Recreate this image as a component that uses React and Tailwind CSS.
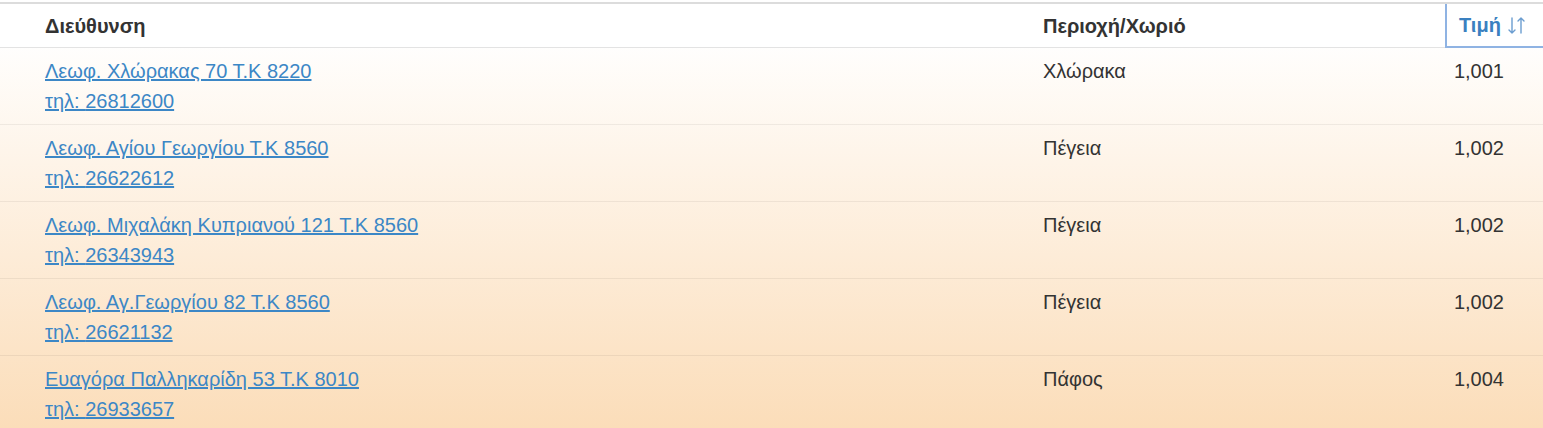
const rows = [
  { address: 'Λεωφ. Χλώρακας 70 Τ.Κ 8220', phone: '26812600', area: 'Χλώρακα', price: '1,001' },
  { address: 'Λεωφ. Αγίου Γεωργίου Τ.Κ 8560', phone: '26622612', area: 'Πέγεια', price: '1,002' },
  { address: 'Λεωφ. Μιχαλάκη Κυπριανού 121 Τ.Κ 8560', phone: '26343943', area: 'Πέγεια', price: '1,002' },
  { address: 'Λεωφ. Αγ.Γεωργίου 82 Τ.Κ 8560', phone: '26621132', area: 'Πέγεια', price: '1,002' },
  { address: 'Ευαγόρα Παλληκαρίδη 53 Τ.Κ 8010', phone: '26933657', area: 'Πάφος', price: '1,004' },
];

const SortIcon = () => (
  <svg width="18" height="17" viewBox="0 0 18 17" fill="none" stroke="#6b9dd0" strokeWidth="1.4" strokeLinecap="round" strokeLinejoin="round" className="ml-[7px]">
    <path d="M4 1v15M1 13l3 3 3-3" />
    <path d="M13 16V1M10 4l3-3 3 3" />
  </svg>
);

const App = () => {
  return (
    <div
      className="w-[1543px] h-[428px] overflow-hidden bg-gradient-to-b from-white from-[8%] to-[#fbddb9] text-[20px] text-[#333] pt-[2px]"
      style={{ fontFamily: '"Liberation Sans", Arial, sans-serif' }}
    >
      <div className="border-t-2 border-[#dcdcdc]">
        <div className="grid grid-cols-[1043px_402px_1fr] h-[44px] bg-white border-b border-[#e3e3e3] font-bold">
          <div className="pl-[45px] flex items-center">Διεύθυνση</div>
          <div className="flex items-center">Περιοχή/Χωριό</div>
          <div className="flex items-center pl-[12px] border-l-2 border-b-2 border-[#8fb3e3] text-[#3a80c0] -mb-px">
            Τιμή
            <SortIcon />
          </div>
        </div>

        {rows.map((row, i) => (
          <div key={i} className="grid grid-cols-[1043px_402px_1fr] border-b border-[#000]/[0.06] py-[8px] leading-[30px]">
            <div className="pl-[45px] flex flex-col">
              <a href="#" className="text-[#3c87c6] underline self-start">{row.address}</a>
              <a href="#" className="text-[#3c87c6] underline self-start">τηλ: {row.phone}</a>
            </div>
            <div>{row.area}</div>
            <div className="text-right pr-[39px]">{row.price}</div>
          </div>
        ))}
      </div>
    </div>
  );
};

export default App;
